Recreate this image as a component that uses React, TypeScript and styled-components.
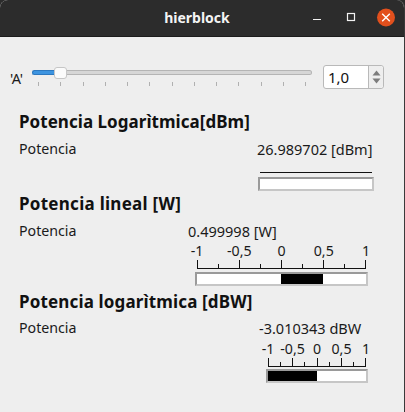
import React from "react";
import styled, { createGlobalStyle } from "styled-components";

const Global = createGlobalStyle`
  html, body { margin: 0; padding: 0; background: #2c2c2c; overflow: hidden; }
  #root { width: 405px; height: 412px; }
`;
const Win = styled.div`
  width: 405px; height: 412px; box-sizing: border-box; display: flex; flex-direction: column;
  background: #eeeeee; border-right: 1px solid #3a3a3a; border-radius: 8px 8px 0 0; overflow: hidden;
  font-family: "Noto Sans", sans-serif; color: #1a1a1a;
`;
const TitleBar = styled.header`
  height: 37px; flex: none; background: #2c2c2c; display: grid; grid-template-columns: 1fr auto 1fr;
  align-items: center; border-bottom: 1px solid #1c1c1c; box-sizing: border-box;
`;
const Title = styled.div`
  grid-column: 2; color: #f4f4f4; font-weight: 700; font-size: 14px; line-height: 36px; padding-right: 10px;
`;
const WinButtons = styled.div`
  grid-column: 3; display: flex; justify-content: flex-end; align-items: center; padding-right: 9px;
`;
const Body = styled.main`
  flex: 1; display: flex; flex-direction: column; padding: 28px 0 0 0;
`;
const ControlRow = styled.div`
  display: flex; align-items: flex-start; height: 25px; padding-left: 10px; margin-bottom: 20px;
`;
const AxisLabel = styled.span`
  width: 22px; font-size: 14.5px; line-height: 18px; margin-top: 4px; letter-spacing: -0.4px;
`;
const SliderBox = styled.div`
  width: 280px; display: flex; flex-direction: column; margin-top: 5px; position: relative;
`;
const Track = styled.div`
  height: 5px; display: flex;
`;
const TrackFill = styled.div`
  width: 24px; box-sizing: border-box; background: #3d94e0; border: 1px solid #2c78c0; border-right: 0; border-radius: 3px 0 0 3px;
`;
const TrackRest = styled.div`
  flex: 1; box-sizing: border-box; background: #d6d6d6; border: 1px solid #b4b4b4; border-left: 0; border-radius: 0 3px 3px 0;
`;
const Handle = styled.div`
  position: absolute; left: 22px; top: -3px; width: 13px; height: 12px; background: #fbfbfb;
  border: 1px solid #c6c6c6; border-radius: 3px; box-sizing: border-box;
`;
const SliderTicks = styled.div`
  display: flex; justify-content: space-between; padding: 7px 6px 0 6px;
`;
const SliderTick = styled.i`
  display: block; width: 1px; height: 4px; background: #b0b0b0;
`;
const Spin = styled.div`
  margin-left: 11px; width: 61px; height: 24px; box-sizing: border-box; display: flex; background: #fff;
  border: 1px solid #b9b9b9; border-radius: 3px;
`;
const SpinValue = styled.div`
  flex: 1; font-size: 15px; line-height: 22px; padding-left: 4px; color: #111; border-right: 1px solid #b9b9b9;
`;
const SpinArrows = styled.div`
  width: 14px; display: flex; align-items: center; justify-content: center; background: #eee; border-radius: 0 3px 3px 0;
`;
const Section = styled.section<{ $h: number }>`
  padding-left: 19px; height: ${(p) => p.$h}px;
`;
const Heading = styled.h2<{ $track: number }>`
  margin: 0; font-size: 17px; line-height: 24px; font-weight: 700; color: #111; white-space: nowrap;
  letter-spacing: ${(p) => p.$track}px;
`;
const Row = styled.div<{ $mt: number }>`
  display: flex; margin-top: ${(p) => p.$mt}px;
`;
const RowLabel = styled.div`
  font-size: 14.2px; line-height: 18px; width: 169px; flex: none;
`;
const Readout = styled.div<{ $shift: number; $w: number }>`
  margin-left: ${(p) => p.$shift}px; width: ${(p) => p.$w}px; flex: none; display: flex; flex-direction: column;
`;
const Value = styled.div<{ $indent: number }>`
  font-size: 14.5px; line-height: 18px; white-space: nowrap; margin-left: ${(p) => p.$indent}px;
`;
const ScaleLabels = styled.div<{ $top: number }>`
  display: flex; justify-content: space-between; padding: 0 2px; margin-top: ${(p) => p.$top}px; height: 18px;
`;
const ScaleLabel = styled.span`
  width: 0; display: flex; justify-content: center; font-size: 14.2px; line-height: 18px; white-space: nowrap;
`;
const ScaleLine = styled.div<{ $top: number }>`
  height: 1px; background: #111; margin: ${(p) => p.$top}px 2px 2px;
`;
const Bar = styled.div<{ $mt: number }>`
  height: 14px; box-sizing: border-box; background: #fff; margin-top: ${(p) => p.$mt}px; display: flex;
  border-style: solid; border-width: 2px; border-color: #9a9a9a #c6c6c6 #c6c6c6 #9a9a9a;
`;
const Gap = styled.div<{ $w: number }>`
  width: ${(p) => p.$w}px;
`;
const Fill = styled.div<{ $w: number }>`
  width: ${(p) => p.$w}px; background: #000;
`;

function Ruler({ width, minor }: { width: number; minor: number[] }) {
  const major = [0, 0.25, 0.5, 0.75, 1];
  return (
    <svg width={width} height={9} style={{ display: "block", marginLeft: 2 }}>
      {major.map((m) => (
        <line key={m} x1={Math.round(m * (width - 1)) + 0.5} x2={Math.round(m * (width - 1)) + 0.5} y1={0} y2={9} stroke="#111" />
      ))}
      {minor.map((m) => (
        <line key={m} x1={Math.round(m * (width - 1)) + 0.5} x2={Math.round(m * (width - 1)) + 0.5} y1={4} y2={9} stroke="#111" />
      ))}
      <line x1={0} x2={width} y1={8.5} y2={8.5} stroke="#111" />
    </svg>
  );
}

const labels = ["-1", "-0,5", "0", "0,5", "1"];
const minors = [0.125, 0.375, 0.625, 0.875];

export default function App() {
  return (
    <Win>
      <Global />
      <TitleBar>
        <Title>hierblock</Title>
        <WinButtons>
          <svg width="87" height="20" viewBox="0 0 87 20">
            <line x1="5" x2="13" y1="11.5" y2="11.5" stroke="#f2f2f2" strokeWidth="1" />
            <rect x="39.5" y="5.5" width="7" height="7" fill="none" stroke="#f2f2f2" strokeWidth="1.2" />
            <circle cx="78" cy="9.5" r="9" fill="#e2501d" />
            <path d="M74.2 5.7 81.8 13.3M81.8 5.7 74.2 13.3" stroke="#fff" strokeWidth="1.4" />
          </svg>
        </WinButtons>
      </TitleBar>
      <Body>
        <ControlRow>
          <AxisLabel>'A'</AxisLabel>
          <SliderBox>
            <Track><TrackFill /><TrackRest /></Track>
            <Handle />
            <SliderTicks>
              {Array.from({ length: 13 }, (_, i) => <SliderTick key={i} />)}
            </SliderTicks>
          </SliderBox>
          <Spin>
            <SpinValue>1,0</SpinValue>
            <SpinArrows>
              <svg width="9" height="16" viewBox="0 0 9 16">
                <path d="M4.5 1.5 8.5 6.5H.5Z" fill="#7c7c7c" />
                <path d="M.5 9.5H8.5L4.5 14.5Z" fill="#7c7c7c" />
              </svg>
            </SpinArrows>
          </Spin>
        </ControlRow>

        <Section $h={82}>
          <Heading $track={0.04}>Potencia Logarìtmica[dBm]</Heading>
          <Row $mt={6}>
            <RowLabel>Potencia</RowLabel>
            <Readout $shift={70} $w={116}>
              <Value $indent={-1}>26.989702 [dBm]</Value>
              <ScaleLine $top={14} />
              <Bar $mt={2}><Gap $w={0} /></Bar>
            </Readout>
          </Row>
        </Section>

        <Section $h={98}>
          <Heading $track={0.27}>Potencia lineal [W]</Heading>
          <Row $mt={6}>
            <RowLabel>Potencia</RowLabel>
            <Readout $shift={7} $w={173}>
              <Value $indent={-7}>0.499998 [W]</Value>
              <ScaleLabels $top={2}>
                {labels.map((l) => <ScaleLabel key={l}>{l}</ScaleLabel>)}
              </ScaleLabels>
              <Ruler width={169} minor={minors} />
              <Bar $mt={3}><Gap $w={84} /><Fill $w={42} /></Bar>
            </Readout>
          </Row>
        </Section>

        <Section $h={100}>
          <Heading $track={0.15}>Potencia logarìtmica [dBW]</Heading>
          <Row $mt={5}>
            <RowLabel>Potencia</RowLabel>
            <Readout $shift={78} $w={102}>
              <Value $indent={-7}>-3.010343 dBW</Value>
              <ScaleLabels $top={3}>
                {labels.map((l) => <ScaleLabel key={l}>{l}</ScaleLabel>)}
              </ScaleLabels>
              <Ruler width={98} minor={minors} />
              <Bar $mt={2}><Fill $w={49} /></Bar>
            </Readout>
          </Row>
        </Section>
      </Body>
    </Win>
  );
}
